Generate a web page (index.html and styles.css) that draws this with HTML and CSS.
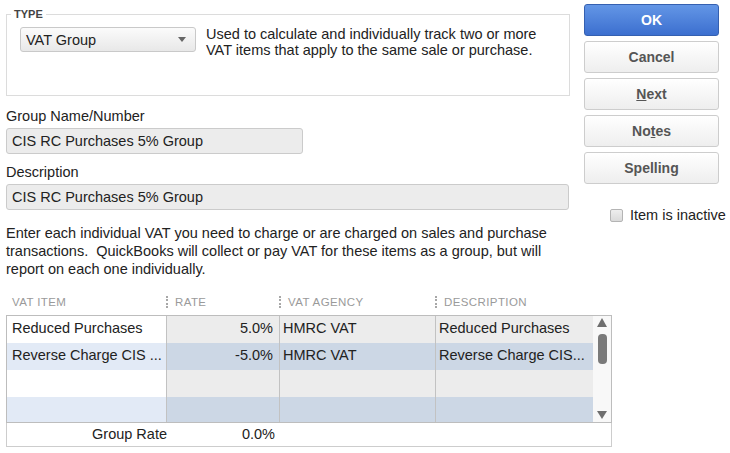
FILE: index.html
```html
<!DOCTYPE html>
<html>
<head>
<meta charset="utf-8">
<link rel="stylesheet" href="styles.css">
</head>
<body>
<div class="page">
  <div class="top">
    <div class="left">
      <div class="typebox">
        <span class="legend">TYPE</span>
        <div class="select">
          <span>VAT Group</span>
          <span class="caret"></span>
        </div>
        <div class="typedesc">Used to calculate and individually track two or more<br>VAT items that apply to the same sale or purchase.</div>
      </div>
      <div class="label first">Group Name/Number</div>
      <div class="input short">CIS RC Purchases 5% Group</div>
      <div class="label">Description</div>
      <div class="input long">CIS RC Purchases 5% Group</div>
      <p class="intro">Enter each individual VAT you need to charge or are charged on sales and purchase<br>transactions.&nbsp; QuickBooks will collect or pay VAT for these items as a group, but will<br>report on each one individually.</p>
    </div>
    <div class="right">
      <button class="btn primary">OK</button>
      <button class="btn">Cancel</button>
      <button class="btn"><u>N</u>ext</button>
      <button class="btn">No<u>t</u>es</button>
      <button class="btn">Spellin<u>g</u></button>
      <div class="check"><span class="box"></span><span>Item is inactive</span></div>
    </div>
  </div>

  <div class="thead">
    <div class="th">VAT ITEM</div>
    <div class="th sep">RATE</div>
    <div class="th sep">VAT AGENCY</div>
    <div class="th sep">DESCRIPTION</div>
  </div>
  <div class="tbody">
    <div class="rows">
      <div class="row odd">
        <div class="td c1">Reduced Purchases</div>
        <div class="td c2">5.0%</div>
        <div class="td c3">HMRC VAT</div>
        <div class="td c4">Reduced Purchases</div>
      </div>
      <div class="row even">
        <div class="td c1">Reverse Charge CIS ...</div>
        <div class="td c2">-5.0%</div>
        <div class="td c3">HMRC VAT</div>
        <div class="td c4">Reverse Charge CIS...</div>
      </div>
      <div class="row odd">
        <div class="td c1"></div>
        <div class="td c2"></div>
        <div class="td c3"></div>
        <div class="td c4"></div>
      </div>
      <div class="row even">
        <div class="td c1"></div>
        <div class="td c2"></div>
        <div class="td c3"></div>
        <div class="td c4"></div>
      </div>
    </div>
    <div class="scroll">
      <span class="up"></span>
      <span class="thumb"></span>
      <span class="down"></span>
    </div>
  </div>
  <div class="tfoot">
    <div class="f1">Group Rate</div>
    <div class="f2">0.0%</div>
  </div>
</div>
</body>
</html>
```

FILE: styles.css
```css
* { box-sizing: border-box; }
html, body { margin: 0; padding: 0; background: #fff; }
body {
  font-family: "Liberation Sans", Arial, sans-serif;
  font-size: 14.5px;
  color: #222;
  width: 730px;
  height: 453px;
  overflow: hidden;
}
.page { padding-left: 6px; }
.top { display: flex; align-items: flex-start; }
.left { width: 564px; }
.right {
  width: 135px;
  margin-left: 14px;
  padding-top: 4px;
  display: flex;
  flex-direction: column;
  gap: 5px;
}

.typebox {
  position: relative;
  margin-top: 14px;
  height: 82px;
  border: 1px solid #dcdcdc;
  padding: 12px 13px;
  display: flex;
  align-items: flex-start;
}
.legend {
  position: absolute;
  left: 4px;
  top: -8px;
  padding: 0 3px;
  background: #fff;
  font-size: 11px;
  line-height: 14px;
  font-weight: bold;
  color: #444;
}
.select {
  width: 176px;
  height: 25px;
  flex: none;
  border: 1px solid #c9c9c9;
  border-radius: 3px;
  background: linear-gradient(#fbfbfb, #e8e8e8);
  display: flex;
  align-items: center;
  justify-content: space-between;
  padding: 0 9px 0 5px;
  line-height: 16px;
}
.caret {
  width: 0; height: 0;
  border-left: 4px solid transparent;
  border-right: 4px solid transparent;
  border-top: 5px solid #666;
}
.typedesc {
  margin-left: 10px;
  margin-top: -1px;
  line-height: 16px;
}

.label { line-height: 18px; margin-top: 9px; }
.label.first { margin-top: 11px; }
.input {
  margin-top: 3px;
  height: 26px;
  border: 1px solid #cbcbcb;
  border-radius: 3px;
  background: #ececec;
  padding: 0 5px;
  line-height: 24px;
}
.input.short { width: 297px; }
.input.long { width: 563px; }
.intro {
  margin: 14px 0 0;
  line-height: 18px;
  white-space: nowrap;
}

.btn {
  height: 32px;
  border: 1px solid #cdcdcd;
  border-radius: 3px;
  background: linear-gradient(#ffffff, #eeeeee);
  font-family: "Liberation Sans", Arial, sans-serif;
  font-size: 14px;
  font-weight: bold;
  color: #555;
  padding: 0;
}
.btn.primary {
  border-color: #3560b0;
  background: linear-gradient(#6396e6, #3c6fcf);
  color: #fff;
}
.check {
  margin-top: 18px;
  padding-left: 26px;
  display: flex;
  align-items: center;
  gap: 7px;
  line-height: 16px;
  white-space: nowrap;
}
.box {
  flex: none;
  width: 13px;
  height: 13px;
  border: 1px solid #b4b4b4;
  border-radius: 2px;
  background: linear-gradient(#eeeeee, #dadada);
}

.thead {
  margin-top: 17px;
  width: 606px;
  padding-left: 1px;
  display: grid;
  grid-template-columns: 160px 113px 156px 157px;
  font-size: 11.5px;
  line-height: 14px;
  color: #9a9a9a;
  letter-spacing: 0.4px;
}
.th { padding-left: 5px; white-space: nowrap; position: relative; }
.th.sep { margin-left: -1px; padding-left: 9px; }
.th.sep::before {
  content: "";
  position: absolute;
  left: 0;
  top: 1px;
  height: 12px;
  border-left: 2px dotted #a8a8a8;
}
.tbody {
  margin-top: 6px;
  width: 606px;
  height: 108px;
  border: 1px solid #bdbdbd;
  display: flex;
  overflow: hidden;
}
.rows { width: 586px; }
.row {
  display: grid;
  grid-template-columns: 160px 113px 156px 157px;
  height: 27px;
}
.td {
  padding-top: 3px;
  line-height: 18px;
  white-space: nowrap;
  overflow: hidden;
}
.c1 { padding-left: 5px; border-right: 1px solid #c2c2c2; }
.c2 { text-align: right; padding-right: 6px; border-right: 1px solid #c2c2c2; }
.c3 { padding-left: 3px; border-right: 1px solid #c2c2c2; }
.c4 { padding-left: 3px; }
.row.odd .c1 { background: #ffffff; }
.row.odd .c2, .row.odd .c3, .row.odd .c4 { background: #ececec; }
.row.even .c1 { background: #e2eaf6; }
.row.even .c2, .row.even .c3, .row.even .c4 { background: #ccd7e5; }

.scroll {
  width: 18px;
  background: #f8f8f8;
  position: relative;
  display: flex;
  flex-direction: column;
  align-items: center;
}
.up {
  margin-top: 2px;
  width: 0; height: 0;
  border-left: 5px solid transparent;
  border-right: 5px solid transparent;
  border-bottom: 9px solid #6e6e6e;
}
.thumb {
  margin-top: 7px;
  width: 9px;
  height: 30px;
  border-radius: 4px;
  background: #7a7a7a;
}
.down {
  position: absolute;
  top: 95px;
  left: 4px;
  width: 0; height: 0;
  border-left: 5px solid transparent;
  border-right: 5px solid transparent;
  border-top: 8px solid #6e6e6e;
}
.tfoot {
  width: 606px;
  height: 24px;
  border: 1px solid #cdcdcd;
  border-top: none;
  display: grid;
  grid-template-columns: 160px 113px;
  padding-left: 1px;
  line-height: 22px;
}
.f1 { text-align: right; padding-right: 1px; }
.f2 { text-align: right; padding-right: 6px; }
```
